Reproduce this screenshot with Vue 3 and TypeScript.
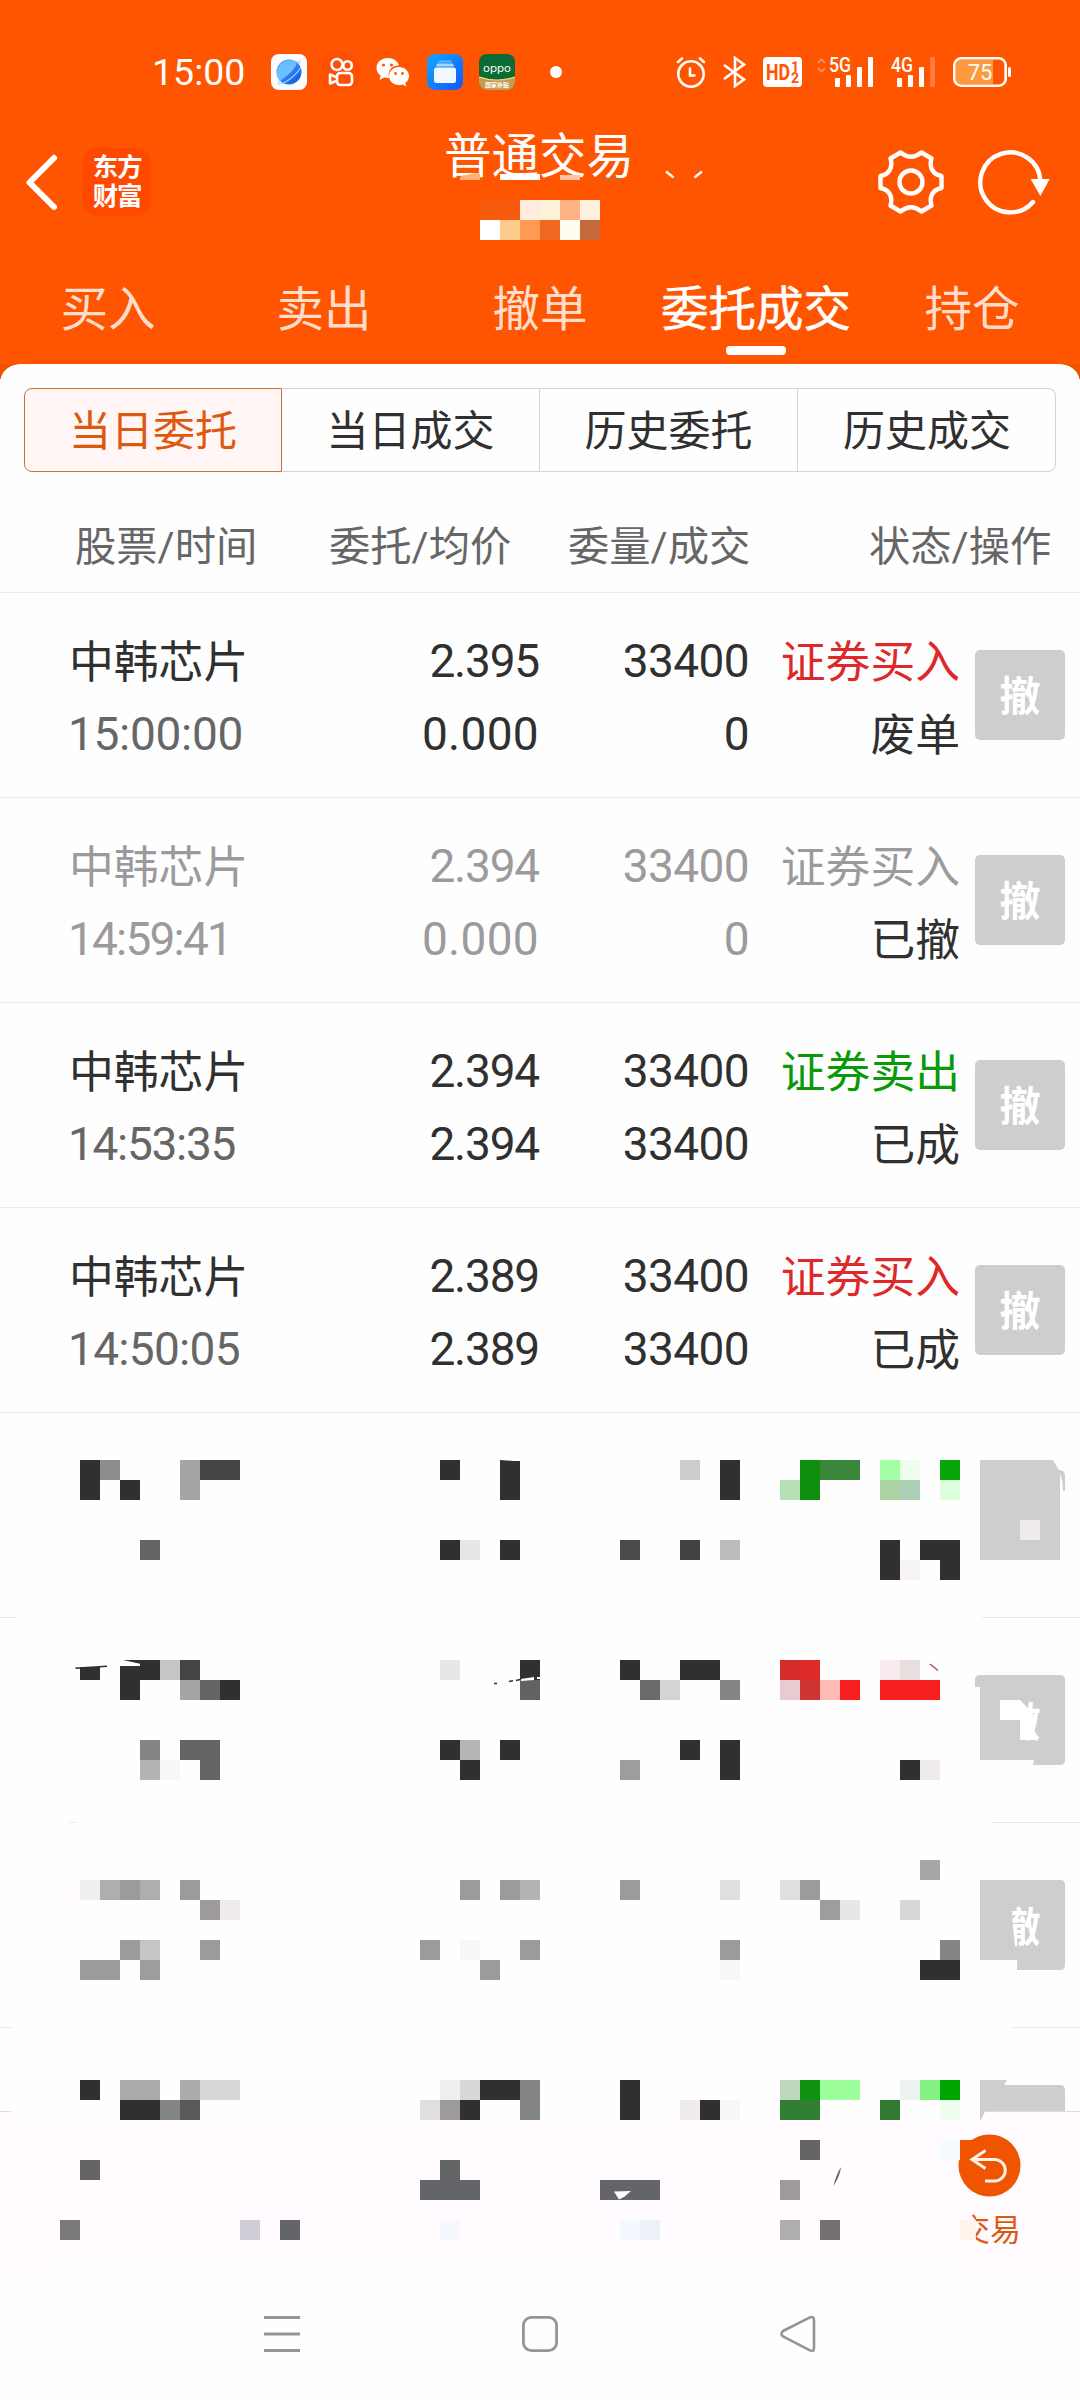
<script setup lang="ts">
type Tile = [x: number, y: number, w: number, h: number, fill: string]

interface Order {
  time: string
  timeGap: number
  price: string
  avg: string
  qty: string
  done: string
  side: string
  tone: 'buy' | 'sell' | 'muted'
  state: string
  muted?: boolean
}

interface MaskedRow {
  id: string
  top: number
  height: number
  tiles: Tile[]
}

const tabs = ['买入', '卖出', '撤单', '委托成交', '持仓']
const activeTab = '委托成交'
const segments = ['当日委托', '当日成交', '历史委托', '历史成交']
const columns = ['股票/时间', '委托/均价', '委量/成交', '状态/操作']

const orders: Order[] = [
  { time: '15:00:00', timeGap: -0.3, price: '2.395', avg: '0.000', qty: '33400', done: '0', side: '证券买入', tone: 'buy', state: '废单' },
  { time: '14:59:41', timeGap: -1.8, price: '2.394', avg: '0.000', qty: '33400', done: '0', side: '证券买入', tone: 'muted', state: '已撤', muted: true },
  { time: '14:53:35', timeGap: -1.3, price: '2.394', avg: '2.394', qty: '33400', done: '33400', side: '证券卖出', tone: 'sell', state: '已成' },
  { time: '14:50:05', timeGap: -0.7, price: '2.389', avg: '2.389', qty: '33400', done: '33400', side: '证券买入', tone: 'buy', state: '已成' },
]

const gap = (v: string): string => (v === '0.000' ? '0.3px' : v.includes('.') ? '-1.2px' : '-0.6px')

const D = '#303030'
const M = '#636563'
const G = '#9c9a9c'
const L = '#e7e7e7'

const titleTiles: Tile[] = [
  [500, 174, 40, 6, '#ffffff'],
  [560, 175, 20, 5, '#ffc3a5'],
  [600, 178, 20, 2, '#c8683a'],
  [480, 200, 40, 20, '#f75a0c'],
  [520, 200, 20, 20, '#ffebdf'],
  [540, 200, 20, 20, '#fff1d6'],
  [560, 200, 20, 20, '#ffb384'],
  [580, 200, 20, 20, '#fff0de'],
  [480, 220, 20, 20, '#ffffff'],
  [500, 220, 20, 20, '#ffcb8c'],
  [520, 220, 20, 20, '#ff9a52'],
  [540, 220, 20, 20, '#ef6921'],
  [560, 220, 20, 20, '#fffcf0'],
  [580, 220, 20, 20, '#c6693a'],
]

const masked: MaskedRow[] = [
  {
    id: 'a', top: 1413, height: 205,
    tiles: [
      [80, 1460, 20, 40, D], [100, 1460, 20, 20, '#8c8e8b'], [120, 1480, 20, 20, D],
      [180, 1460, 20, 40, '#a5a5a5'], [200, 1460, 40, 20, '#424542'], [140, 1540, 20, 20, M],
      [440, 1460, 20, 20, D], [500, 1461, 20, 39, D],
      [440, 1540, 20, 20, D], [460, 1540, 20, 20, L], [500, 1540, 20, 20, D],
      [680, 1460, 20, 20, '#cecbce'], [720, 1460, 20, 40, D],
      [620, 1540, 20, 20, '#4a4a4a'], [680, 1540, 20, 20, '#424242'], [720, 1540, 20, 20, '#bdbabd'],
      [780, 1480, 20, 20, '#b5dfb5'], [800, 1460, 20, 40, '#108e10'], [820, 1460, 40, 20, '#39863a'],
      [880, 1460, 20, 20, '#a5ffa5'], [900, 1460, 20, 20, '#efffef'], [940, 1460, 20, 20, '#08a608'],
      [880, 1480, 20, 20, '#add3a5'], [900, 1480, 20, 20, '#adcfb5'], [940, 1480, 20, 20, '#deffde'],
      [880, 1540, 20, 40, D], [900, 1560, 20, 20, '#f7f3f7'], [920, 1540, 20, 20, D], [940, 1540, 20, 40, D],
      [0, 1617, 17, 1, '#e9e9e9'], [982, 1617, 98, 1, '#e9e9e9'],
    ],
  },
  {
    id: 'b', top: 1618, height: 205,
    tiles: [
      [80, 1667, 20, 13, D], [120, 1666, 20, 34, D], [140, 1660, 20, 20, D], [160, 1660, 20, 20, '#c6c6c6'],
      [180, 1660, 20, 20, '#424542'], [180, 1680, 20, 20, '#a5a5a5'], [200, 1680, 20, 20, M], [220, 1680, 20, 20, D],
      [140, 1740, 20, 20, '#848684'], [140, 1760, 20, 20, '#b5b2b5'], [160, 1760, 20, 20, '#f7f7f7'],
      [180, 1740, 40, 20, M], [200, 1760, 20, 20, M],
      [440, 1660, 20, 20, L], [520, 1660, 20, 20, D], [520, 1680, 20, 20, '#636163'],
      [440, 1740, 20, 20, D], [460, 1740, 20, 20, '#b5b5b5'], [500, 1740, 20, 20, D], [460, 1760, 20, 20, D],
      [620, 1660, 20, 20, D], [640, 1680, 20, 20, '#6b696b'], [660, 1680, 20, 20, '#d6d3d6'],
      [680, 1660, 40, 20, D], [720, 1680, 20, 20, '#848684'],
      [680, 1740, 20, 20, D], [720, 1740, 20, 40, D], [620, 1760, 20, 20, '#9c9e9c'],
      [780, 1660, 20, 20, '#d62c29'], [800, 1660, 20, 20, '#de2c29'], [780, 1680, 20, 20, '#e7cbce'],
      [800, 1680, 20, 20, '#ce3431'], [820, 1680, 20, 20, '#ffbab5'], [840, 1680, 20, 20, '#f72021'],
      [880, 1660, 20, 20, '#f7ebef'], [900, 1660, 20, 20, '#e7dfde'], [880, 1680, 60, 20, '#f72021'],
      [900, 1760, 20, 20, D], [920, 1760, 20, 20, '#efebef'],
      [69, 1822, 7, 1, '#e9e9e9'], [992, 1822, 88, 1, '#e9e9e9'],
    ],
  },
  {
    id: 'c', top: 1823, height: 205,
    tiles: [
      [60, 1880, 20, 20, '#fffbff'], [80, 1880, 20, 20, '#efefef'], [100, 1880, 20, 20, '#adaead'],
      [120, 1880, 20, 20, G], [140, 1880, 20, 20, '#adaead'], [180, 1880, 20, 20, G],
      [200, 1900, 20, 20, G], [220, 1900, 20, 20, '#efebef'],
      [120, 1940, 20, 20, G], [140, 1940, 20, 20, '#c6c6c6'], [200, 1940, 20, 20, G],
      [80, 1960, 40, 20, G], [140, 1960, 20, 20, '#9c9e9c'],
      [460, 1880, 20, 20, G], [500, 1880, 20, 20, G], [520, 1880, 20, 20, '#b5b2b5'],
      [420, 1940, 20, 20, G], [460, 1940, 20, 20, '#f7f7f7'], [520, 1940, 20, 20, G], [480, 1960, 20, 20, G],
      [620, 1880, 20, 20, G], [720, 1880, 20, 20, '#dedfde'], [720, 1940, 20, 20, G], [720, 1960, 20, 20, '#f7f7f7'],
      [780, 1880, 20, 20, '#dedfde'], [800, 1880, 20, 20, G], [820, 1900, 20, 20, '#9c9e9c'], [840, 1900, 20, 20, L],
      [900, 1900, 20, 20, '#d6d7d6'], [920, 1860, 20, 20, '#a5a6a5'],
      [940, 1940, 20, 20, '#848684'], [920, 1960, 40, 20, D],
      [0, 2027, 12, 1, '#e9e9e9'], [1012, 2027, 68, 1, '#e9e9e9'],
    ],
  },
  {
    id: 'd', top: 2028, height: 92,
    tiles: [
      [80, 2080, 20, 20, D], [120, 2080, 40, 20, '#adaaad'], [180, 2080, 20, 20, '#adaaad'], [200, 2080, 40, 20, '#d6d7d6'],
      [120, 2100, 40, 20, D], [160, 2100, 20, 20, '#848684'], [180, 2100, 20, 20, '#5a595a'],
      [440, 2080, 20, 20, '#efefef'], [460, 2080, 20, 20, '#d6d7d6'], [480, 2080, 40, 20, D], [520, 2080, 20, 40, '#848684'],
      [420, 2100, 20, 20, '#dedfde'], [440, 2100, 20, 20, G], [460, 2100, 20, 20, D],
      [620, 2080, 20, 40, D], [680, 2100, 20, 20, '#efebef'], [700, 2100, 20, 20, D], [720, 2100, 20, 20, '#f7f7f7'],
      [780, 2080, 20, 20, '#bdd7bd'], [800, 2080, 20, 20, '#109210'], [820, 2080, 40, 20, '#9cff9c'],
      [780, 2100, 40, 20, '#317d31'], [880, 2100, 20, 20, '#317931'],
      [900, 2080, 20, 20, '#eff3ef'], [920, 2080, 20, 20, '#84f384'], [940, 2080, 20, 20, '#00a600'], [940, 2100, 20, 20, '#efffef'],
      [0, 2112, 11, 8, '#fffbff'], [0, 2111, 11, 1, '#dedede'],
    ],
  },
]

const barTiles: Tile[] = [
  [80, 2160, 20, 20, M], [60, 2220, 20, 20, '#7b797b'], [240, 2220, 20, 20, '#cecfd6'], [280, 2220, 20, 20, '#636569'],
  [440, 2160, 20, 20, M], [420, 2180, 60, 20, '#636569'], [440, 2220, 20, 20, '#f5f8ff'],
  [600, 2180, 60, 20, '#636569'], [620, 2220, 20, 20, '#f5f8ff'], [640, 2220, 20, 20, '#eff1f8'],
  [800, 2140, 20, 20, M], [780, 2180, 20, 20, G], [780, 2220, 20, 20, '#adaead'], [820, 2220, 20, 20, '#737173'],
  [940, 2140, 20, 20, '#f5fbff'], [960, 2140, 18, 16, '#ef5500'],
]
</script>

<template>
  <div class="screen">
    <header class="top">
      <div class="status">
        <span class="clock">15:00</span>
        <div class="apps">
          <svg width="36" height="36" viewBox="0 0 36 36">
            <defs>
              <linearGradient id="planet" x1="0" y1="0" x2="1" y2="1">
                <stop offset="0" stop-color="#5cb8ff" /><stop offset="1" stop-color="#0a4fe0" />
              </linearGradient>
            </defs>
            <rect width="36" height="36" rx="8" fill="#fdfdff" />
            <path d="M6 31C4 26 25 4 30 6c2 3-18 28-24 25z" fill="#cdeaff" />
            <circle cx="18" cy="18" r="12.500" fill="url(#planet)" />
            <path d="M6.500 23C4 12 14 3 25.500 7.800 27 12 18 21 9 27z" fill="#6cc0ff" />
            <path d="M11 30C19 26 27 19 30 13" fill="none" stroke="#8fd0ff" stroke-width="1.200" />
          </svg>
          <svg width="36" height="36" viewBox="0 0 36 36" fill="none" stroke="#fff" stroke-width="2.600">
            <rect width="36" height="36" rx="8" fill="#ff4f05" stroke="none" />
            <circle cx="14" cy="10.500" r="5.500" /><circle cx="24.500" cy="11.500" r="4.300" />
            <rect x="14" y="19" width="15" height="12" rx="3.500" />
            <path d="M13 23l-6-2.500v9l6-2.500" stroke-linejoin="round" />
          </svg>
          <svg width="36" height="36" viewBox="0 0 36 36">
            <path d="M13 4C6.500 4 1.500 8.300 1.500 14c0 3.200 1.500 5.800 4 7.600L4.500 26l4.700-2.600c1.600.4 3.200.6 5 .4C12 17 17 11 24 11.600 22.800 7 18.400 4 13 4z" fill="#fff" />
            <path d="M24 13c-5.700 0-10 4-10 9s4.300 9 10 9c1.300 0 2.500-.2 3.700-.6l3.600 2-.9-3.500c2.300-1.700 3.600-4 3.600-6.900 0-5-4.300-9-10-9z" fill="#fff" />
            <g fill="#ff5500"><circle cx="8.500" cy="11" r="1.600" /><circle cx="16.500" cy="11" r="1.600" /><circle cx="20.500" cy="19.500" r="1.400" /><circle cx="27.500" cy="19.500" r="1.400" /></g>
          </svg>
          <svg width="36" height="36" viewBox="0 0 36 36">
            <defs>
              <linearGradient id="files" x1="0" y1="0" x2="1" y2="1">
                <stop offset="0" stop-color="#12a8ff" /><stop offset="1" stop-color="#1356ff" />
              </linearGradient>
            </defs>
            <rect width="36" height="36" rx="8" fill="url(#files)" />
            <path d="M12 6.500h12l1 2H11z" fill="#5fbcff" /><path d="M10 9.500h16l1 3H9z" fill="#a5d8ff" />
            <rect x="7" y="13.500" width="22" height="15.500" rx="2.500" fill="#f3f8ff" />
          </svg>
          <svg width="36" height="36" viewBox="0 0 36 36">
            <defs><clipPath id="oppo"><rect width="36" height="36" rx="8" /></clipPath></defs>
            <g clip-path="url(#oppo)">
              <rect width="36" height="36" fill="#0a6b35" />
              <path d="M0 23q18 6 36 0v13H0z" fill="#c79b56" />
              <path d="M0 23q18 6 36 0" fill="none" stroke="#f2dc7a" stroke-width="1.200" />
            </g>
            <text x="18" y="17.500" text-anchor="middle" class="oppo" textLength="28" lengthAdjust="spacingAndGlyphs">oppo</text>
            <text x="18" y="33" text-anchor="middle" class="subsidy">国家补贴</text>
          </svg>
        </div>
        <i class="dot"></i>
        <div class="signals">
          <svg width="340" height="36" viewBox="676 54 340 36" fill="none" stroke="#fff">
            <g stroke-width="2.600" stroke-linecap="round">
              <circle cx="691" cy="74" r="12.700" /><path d="M690 68.500v7h4.500" /><path d="M678 62l4-3.500M704 62l-4-3.500" />
              <path d="M724 65l20 14.500L735 86V58l9 6.500L724 79" stroke-linejoin="miter" stroke-linecap="butt" />
            </g>
            <rect x="763" y="57" width="39" height="30" rx="4" fill="#fff" stroke="none" />
            <text x="766" y="80" class="hd" textLength="24" lengthAdjust="spacingAndGlyphs">HD</text>
            <text x="791" y="71.500" class="hdn">1</text>
            <text x="791" y="83" class="hdn">2</text>
            <path d="M818 63l3.500-3.500L825 63M818 68l3.500 3.500L825 68" stroke="#ff8a55" stroke-width="2" />
            <text x="829" y="72" class="net" textLength="22" lengthAdjust="spacingAndGlyphs">5G</text>
            <text x="891" y="72" class="net" textLength="22" lengthAdjust="spacingAndGlyphs">4G</text>
            <g fill="#fff" stroke="none">
              <rect x="835" y="78" width="5" height="9" rx="1" /><rect x="846" y="75" width="5" height="12" rx="1" />
              <rect x="857" y="67" width="5" height="20" rx="1" /><rect x="868" y="57" width="5" height="30" rx="1" />
              <rect x="897" y="78" width="5" height="9" rx="1" /><rect x="908" y="75" width="5" height="12" rx="1" />
              <rect x="919" y="67" width="5" height="20" rx="1" />
              <rect x="930" y="57" width="5" height="30" rx="1" fill="#ff7d40" />
              <rect x="1008" y="67" width="3" height="10" rx="1.500" />
            </g>
            <path d="M960 60h33v24h-33q-4 0-4-4V64q0-4 4-4z" fill="#ff9a3c" stroke="none" />
            <rect x="954.300" y="58.300" width="51.400" height="27.400" rx="7" stroke-width="2.600" />
            <text x="980" y="80" text-anchor="middle" class="batt">75</text>
          </svg>
        </div>
      </div>

      <div class="titlebar">
        <svg class="back" width="40" height="60" viewBox="22 152 40 60">
          <path d="M54 158L29.500 182.500L54 207" fill="none" stroke="#fff" stroke-width="6" stroke-linecap="round" stroke-linejoin="round" />
        </svg>
        <div class="logo"><span>东方</span><span>财富</span></div>
        <div class="title">
          <h1>普通交易</h1>
          <svg width="270" height="80" viewBox="446 170 270 80">
            <rect x="440" y="178" width="200" height="20" fill="#ff5500" />
            <path d="M460 180v-3q10-4 20-4v7z" fill="#ffb27a" />
            <rect v-for="(t, i) in titleTiles" :key="i" :x="t[0]" :y="t[1]" :width="t[2]" :height="t[3]" :fill="t[4]" />
            <path d="M666 171.500l7.500 6M702 171.500l-7.500 6" stroke="#fff" stroke-width="2.400" />
          </svg>
        </div>
        <svg class="gear" width="70" height="70" viewBox="875.500 147 70 70" fill="none" stroke="#fff" stroke-width="4.400" stroke-linejoin="round">
          <path d="M900 152.500Q910.500 161 921 152.500L931 158.500C928.500 167 932 174.500 941 176V188C932 189.500 928.500 197 931 205.500L921 211.500Q910.500 203 900 211.500L890 205.500C892.500 197 889 189.500 880 188V176C889 174.500 892.500 167 890 158.500Z" />
          <circle cx="910.500" cy="182" r="11.500" />
        </svg>
        <svg class="reload" width="76" height="70" viewBox="975 147 76 70">
          <path d="M1033 202A30 30 0 1 1 1040.300 181" fill="none" stroke="#fff" stroke-width="4.400" stroke-linecap="round" />
          <path d="M1030.700 179h19l-9.400 17z" fill="#fff" />
        </svg>
      </div>

      <nav class="tabs">
        <span v-for="t in tabs" :key="t" class="tab" :class="{ on: t === activeTab }">{{ t }}</span>
      </nav>
    </header>

    <main class="sheet">
      <div class="segments">
        <span v-for="(s, i) in segments" :key="s" class="seg" :class="{ on: i === 0 }">{{ s }}</span>
      </div>
      <div class="cols">
        <span v-for="c in columns" :key="c">{{ c }}</span>
      </div>

      <div v-for="o in orders" :key="o.time" class="row" :class="{ muted: o.muted }">
        <div class="cell name">
          <span>中韩芯片</span>
          <span class="time" :style="{ letterSpacing: o.timeGap + 'px' }">{{ o.time }}</span>
        </div>
        <div class="cell price">
          <span class="num" :style="{ letterSpacing: gap(o.price) }">{{ o.price }}</span>
          <span class="num" :style="{ letterSpacing: gap(o.avg) }">{{ o.avg }}</span>
        </div>
        <div class="cell qty">
          <span class="num" :style="{ letterSpacing: gap(o.qty) }">{{ o.qty }}</span>
          <span class="num" :style="{ letterSpacing: gap(o.done) }">{{ o.done }}</span>
        </div>
        <div class="cell state">
          <span :class="o.tone">{{ o.side }}</span>
          <span class="result">{{ o.state }}</span>
        </div>
        <button class="cancel">撤</button>
      </div>

      <svg v-for="m in masked" :key="m.id" class="masked" width="1080" :height="m.height" :viewBox="`0 ${m.top} 1080 ${m.height}`">
        <rect v-for="(t, i) in m.tiles" :key="i" :x="t[0]" :y="t[1]" :width="t[2]" :height="t[3]" :fill="t[4]" shape-rendering="crispEdges" />
        <g v-if="m.id === 'a'">
          <path d="M500 1460l20 1.500v1h-20z" :fill="D" />
          <path d="M980 1460H1053L1060 1472V1560H980Z" fill="#cecece" />
          <path d="M1059 1470q6 0 6 6v15h-2q0-12-4-20z" fill="#cecece" />
          <rect x="1020" y="1520" width="20" height="20" fill="#efebef" />
        </g>
        <g v-else-if="m.id === 'b'">
          <path d="M75 1667.500L107 1665.500v1.500L76 1669z" :fill="D" />
          <path d="M123 1660h18v4z" :fill="D" />
          <path d="M521 1679l13-2v3l-13 1zM537 1677h3v2h-3z" fill="#fff" />
          <path d="M509 1681.500l4-.8M516 1680.500l4-1M494 1683.500h3" :stroke="D" stroke-width="1.500" />
          <path d="M930 1664l8 6.500" stroke="#b54a4a" stroke-width="1.500" />
          <path d="M975 1687V1680Q975 1675 980 1675H1060Q1065 1675 1065 1680V1760Q1065 1765 1060 1765H1033L1034 1760H980V1687Z" fill="#cecece" />
          <path d="M1000 1700H1020L1027 1707L1033 1714L1035 1740H1020V1720H1000Z" fill="#fff" />
          <clipPath id="cutB"><path d="M1027 1690H1050V1750H1027Z" /></clipPath>
          <text x="1020" y="1737" text-anchor="middle" class="glyph" clip-path="url(#cutB)">撤</text>
        </g>
        <g v-else-if="m.id === 'c'">
          <path d="M980 1880H1060Q1065 1880 1065 1885V1965Q1065 1970 1060 1970H1017V1960H980Z" fill="#cecece" />
          <clipPath id="cutC"><path d="M1010 1900H1050V1955H1016Z" /></clipPath>
          <text x="1020" y="1942" text-anchor="middle" class="glyph" clip-path="url(#cutC)">撤</text>
        </g>
        <g v-else>
          <path d="M980 2080H1007L1004 2085H1060Q1065 2085 1065 2090V2112H985L981 2120H980Z" fill="#cecece" />
          <path d="M985 2112H1080V2120H981Z" fill="#fffbff" />
          <path d="M985 2111.500H1080" stroke="#dedede" />
        </g>
      </svg>
    </main>

    <footer class="bar">
      <svg width="1080" height="140" viewBox="0 2120 1080 140">
        <path d="M0 2259H50L60 2268H0ZM966 2259H1080V2268H958Z" fill="#fffbff" />
        <circle cx="989.500" cy="2165.500" r="31" fill="#ef5500" />
        <rect v-for="(t, i) in barTiles" :key="i" :x="t[0]" :y="t[1]" :width="t[2]" :height="t[3]" :fill="t[4]" shape-rendering="crispEdges" />
        <path d="M614 2191.500L631 2191L624 2197L619 2199.500Z" fill="#fffbff" />
        <path d="M841 2167Q840 2176 833.500 2186Q836 2175 841 2167Z" :fill="M" />
        <path d="M985.500 2150.500L972 2159.500L985.500 2168.500M972 2159.500H995.500A10.800 10.800 0 0 1 995.500 2181H985" fill="none" stroke="#fff3ea" stroke-width="3" />
        <text x="959" y="2241" class="trade">交易</text>
        <path d="M950 2205H971V2215L975.600 2220V2252H950Z" fill="#fffbff" />
        <rect x="960" y="2220" width="15.600" height="20" fill="#fff5ea" />
      </svg>
    </footer>

    <div class="sysnav">
      <svg width="44" height="44" viewBox="260 2312 44 44"><path d="M264 2317.500h36M264 2334h36M264 2350.500h36" stroke="#959595" stroke-width="3" /></svg>
      <svg width="44" height="44" viewBox="518 2312 44 44"><rect x="523.400" y="2317.400" width="33.200" height="33.200" rx="8" fill="none" stroke="#959595" stroke-width="2.800" /></svg>
      <svg width="44" height="44" viewBox="776 2312 44 44"><path d="M783 2331L809 2317.800Q814 2315.500 814 2320V2348Q814 2352.500 809 2349.800L783 2336.500Q780 2334 783 2331Z" fill="none" stroke="#959595" stroke-width="2.600" /></svg>
    </div>
  </div>
</template>

<style>
body {
  margin: 0;
  background: #fefefe;
}
</style>

<style scoped>
.screen {
  width: 1080px;
  height: 2400px;
  overflow: hidden;
  background: #fefefe;
  font-family: Roboto, "Noto Sans CJK SC", sans-serif;
  color: #303030;
  display: flex;
  flex-direction: column;
}
svg {
  display: block;
  flex: none;
}
.top {
  background: #ff5500;
  height: 364px;
  flex: none;
}
.status {
  height: 108px;
  padding-top: 18px;
  padding-left: 152px;
  display: flex;
  align-items: center;
  color: #fff;
}
.clock {
  width: 119px;
  font-size: 37.500px;
  line-height: 42px;
}
.apps {
  display: flex;
  gap: 16px;
}
.dot {
  width: 12px;
  height: 12px;
  border-radius: 50%;
  background: #fff;
  margin-left: 35px;
}
.signals {
  margin-left: 114px;
}
text {
  stroke: none;
}
.oppo {
  font: 400 10.500px Inter, sans-serif;
  fill: #fff;
}
.subsidy {
  font: 700 6px "Noto Sans CJK SC", sans-serif;
  fill: #fff;
}
.hd {
  font: 700 22px Roboto, sans-serif;
  fill: #ff5500;
}
.hdn {
  font: 700 14px Roboto, sans-serif;
  fill: #ff5500;
}
.net {
  font: 500 20px Roboto, sans-serif;
  fill: #fff;
}
.batt {
  font: 400 22px Roboto, sans-serif;
  fill: #fff;
}
.titlebar {
  height: 112px;
  display: flex;
  align-items: center;
}
.back {
  margin-left: 22px;
}
.logo {
  margin-left: 21px;
  width: 68px;
  height: 68px;
  border-radius: 15px;
  background: #ff4800;
  display: flex;
  flex-direction: column;
  align-items: center;
  justify-content: center;
  color: #fff;
  font-size: 25.500px;
  font-weight: 700;
  line-height: 29px;
  letter-spacing: -1.300px;
}
.title {
  align-self: flex-start;
  margin-left: 295px;
  width: 270px;
}
.title h1 {
  margin: 0 0 0 -2px;
  height: 52px;
  font-size: 47.500px;
  font-weight: 400;
  line-height: 63px;
  color: #fff;
}
.title svg {
  position: relative;
  margin-top: -8px;
  margin-bottom: -30px;
}
.gear {
  margin-left: 159.500px;
}
.reload {
  margin-left: 29.500px;
}
.tabs {
  height: 126px;
  display: flex;
}
.tab {
  flex: 1;
  position: relative;
  text-align: center;
  font-size: 47.500px;
  line-height: 145px;
  color: #ffddcc;
  white-space: nowrap;
}
.tab.on {
  color: #fff;
  -webkit-text-stroke: 0.500px #fff;
}
.tab.on::after {
  content: "";
  position: absolute;
  left: 78px;
  top: 108px;
  width: 60px;
  height: 9px;
  border-radius: 4px;
  background: #fff;
}
.sheet {
  flex: none;
  height: 1756px;
}
.sheet::before {
  content: "";
  display: block;
  height: 24px;
  background: radial-gradient(ellipse 20px 18px at 20px 18px, #fefefe 97%, #f05300) 0 0 / 20px 15px no-repeat,
    radial-gradient(ellipse 20px 18px at 0 18px, #fefefe 97%, #f05300) 100% 0 / 20px 15px no-repeat;
}
.segments {
  margin: 0 24px;
  height: 84px;
  display: flex;
}
.seg {
  width: 258px;
  box-sizing: border-box;
  border: 1px solid #d3d3d8;
  border-left-width: 0;
  text-align: center;
  font-size: 42px;
  line-height: 86px;
}
.seg:last-child {
  border-radius: 0 8px 8px 0;
  padding-left: 1px;
}
.seg.on {
  border: 1px solid #c8703c;
  border-radius: 8px 0 0 8px;
  background: #fff6f5;
  color: #dc5a10;
}
.cols {
  height: 121px;
  box-sizing: border-box;
  border-bottom: 1px solid #ebebeb;
  display: grid;
  grid-template-columns: 254px 239px 301px auto;
  padding-left: 75px;
  padding-top: 15px;
  font-size: 41.300px;
  line-height: 120px;
  color: #666;
  white-space: nowrap;
}
.row {
  height: 205px;
  box-sizing: border-box;
  border-bottom: 1px solid #ebebeb;
  display: flex;
  font-size: 44.800px;
}
.cell {
  padding-top: 32px;
  display: flex;
  flex-direction: column;
  line-height: 73px;
  white-space: nowrap;
}
.name {
  padding-top: 33px;
  margin-left: 69px;
  width: 231px;
}
.time {
  font-size: 46px;
  color: #666;
  margin: -1px 0 0 -1px;
}
.num {
  font-size: 46px;
}
.price {
  width: 239px;
  align-items: flex-end;
}
.qty {
  width: 210px;
  align-items: flex-end;
}
.state {
  padding-top: 33px;
  width: 211px;
  align-items: flex-end;
}
.cancel {
  margin: 57px 0 0 15px;
  width: 90px;
  height: 90px;
  padding: 0;
  border: 0;
  border-radius: 5px;
  background: #cecece;
  color: #fff;
  font: 700 41px/95px Roboto, "Noto Sans CJK SC", sans-serif;
}
.row.muted,
.row.muted .time {
  color: #9c9a9c;
}
.row.muted .result {
  color: #303030;
}
.buy {
  color: #de2829;
}
.sell {
  color: #089a08;
}
.glyph {
  font: 700 41px "Noto Sans CJK SC", sans-serif;
  fill: #fff;
}
.bar {
  height: 140px;
  flex: none;
  background: #fffbff;
}
.bar svg {
  overflow: visible;
}
.trade {
  font: 400 31px "Noto Sans CJK SC", sans-serif;
  fill: #dc5a10;
}
.sysnav {
  flex: none;
  height: 140px;
  padding: 8px 260px 0;
  display: flex;
  justify-content: space-between;
  align-items: center;
  box-sizing: border-box;
}
</style>
